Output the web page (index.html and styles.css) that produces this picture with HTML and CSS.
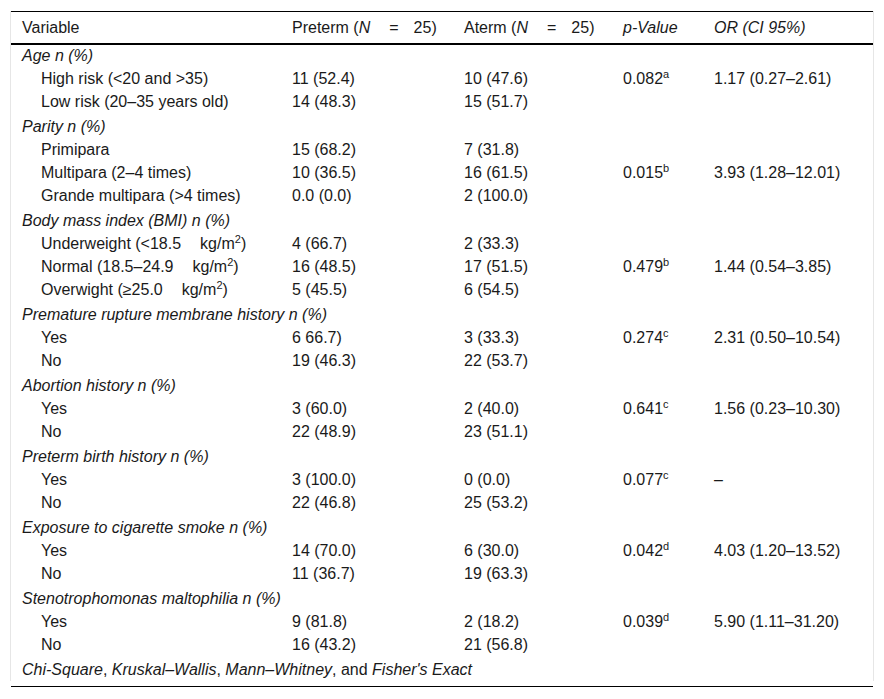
FILE: index.html
```html
<!DOCTYPE html>
<html lang="en">
<head>
<meta charset="utf-8">
<title>Table</title>
<link rel="stylesheet" href="styles.css">
</head>
<body>
<div class="page">
  <div class="frame">
    <table class="data">
      <colgroup>
        <col class="c1"><col class="c2"><col class="c3"><col class="c4"><col class="c5">
      </colgroup>
      <thead>
        <tr>
          <th>Variable</th>
          <th>Preterm (<i>N</i><span class="sp-l"></span>=<span class="sp-r"></span>25)</th>
          <th>Aterm (<i>N</i><span class="sp-l"></span>=<span class="sp-r"></span>25)</th>
          <th><i>p-Value</i></th>
          <th><i>OR (CI 95%)</i></th>
        </tr>
      </thead>
      <tbody>
        <tr class="cat first"><td colspan="5">Age n (%)</td></tr>
        <tr class="sub"><td>High risk (&lt;20 and &gt;35)</td><td>11 (52.4)</td><td>10 (47.6)</td><td>0.082<sup>a</sup></td><td>1.17 (0.27–2.61)</td></tr>
        <tr class="sub"><td>Low risk (20–35 years old)</td><td>14 (48.3)</td><td>15 (51.7)</td><td></td><td></td></tr>

        <tr class="cat"><td colspan="5">Parity n (%)</td></tr>
        <tr class="sub"><td>Primipara</td><td>15 (68.2)</td><td>7 (31.8)</td><td></td><td></td></tr>
        <tr class="sub"><td>Multipara (2–4 times)</td><td>10 (36.5)</td><td>16 (61.5)</td><td>0.015<sup>b</sup></td><td>3.93 (1.28–12.01)</td></tr>
        <tr class="sub"><td>Grande multipara (&gt;4 times)</td><td>0.0 (0.0)</td><td>2 (100.0)</td><td></td><td></td></tr>

        <tr class="cat"><td colspan="5">Body mass index (BMI) n (%)</td></tr>
        <tr class="sub"><td>Underweight (&lt;18.5<span class="sp-u"></span>kg/m<sup>2</sup>)</td><td>4 (66.7)</td><td>2 (33.3)</td><td></td><td></td></tr>
        <tr class="sub"><td>Normal (18.5–24.9<span class="sp-u"></span>kg/m<sup>2</sup>)</td><td>16 (48.5)</td><td>17 (51.5)</td><td>0.479<sup>b</sup></td><td>1.44 (0.54–3.85)</td></tr>
        <tr class="sub"><td>Overwight (≥25.0<span class="sp-u"></span>kg/m<sup>2</sup>)</td><td>5 (45.5)</td><td>6 (54.5)</td><td></td><td></td></tr>

        <tr class="cat"><td colspan="5">Premature rupture membrane history n (%)</td></tr>
        <tr class="sub"><td>Yes</td><td>6 66.7)</td><td>3 (33.3)</td><td>0.274<sup>c</sup></td><td>2.31 (0.50–10.54)</td></tr>
        <tr class="sub"><td>No</td><td>19 (46.3)</td><td>22 (53.7)</td><td></td><td></td></tr>

        <tr class="cat"><td colspan="5">Abortion history n (%)</td></tr>
        <tr class="sub"><td>Yes</td><td>3 (60.0)</td><td>2 (40.0)</td><td>0.641<sup>c</sup></td><td>1.56 (0.23–10.30)</td></tr>
        <tr class="sub"><td>No</td><td>22 (48.9)</td><td>23 (51.1)</td><td></td><td></td></tr>

        <tr class="cat"><td colspan="5">Preterm birth history n (%)</td></tr>
        <tr class="sub"><td>Yes</td><td>3 (100.0)</td><td>0 (0.0)</td><td>0.077<sup>c</sup></td><td>–</td></tr>
        <tr class="sub"><td>No</td><td>22 (46.8)</td><td>25 (53.2)</td><td></td><td></td></tr>

        <tr class="cat"><td colspan="5">Exposure to cigarette smoke n (%)</td></tr>
        <tr class="sub"><td>Yes</td><td>14 (70.0)</td><td>6 (30.0)</td><td>0.042<sup>d</sup></td><td>4.03 (1.20–13.52)</td></tr>
        <tr class="sub"><td>No</td><td>11 (36.7)</td><td>19 (63.3)</td><td></td><td></td></tr>

        <tr class="cat"><td colspan="5">Stenotrophomonas maltophilia n (%)</td></tr>
        <tr class="sub"><td>Yes</td><td>9 (81.8)</td><td>2 (18.2)</td><td>0.039<sup>d</sup></td><td>5.90 (1.11–31.20)</td></tr>
        <tr class="sub"><td>No</td><td>16 (43.2)</td><td>21 (56.8)</td><td></td><td></td></tr>

        <tr class="note"><td colspan="5"><i>Chi-Square</i>, <i>Kruskal–Wallis</i>, <i>Mann–Whitney</i>, and <i>Fisher's Exact</i></td></tr>
      </tbody>
    </table>
  </div>
  <div class="end-rule"></div>
</div>
</body>
</html>
```

FILE: styles.css
```css
html, body {
  margin: 0;
  padding: 0;
  background: #fff;
}

body {
  font-family: "Liberation Sans", Arial, sans-serif;
  font-size: 16px;
  color: #1a1a1a;
}

.page {
  padding: 11px 10px 0;
  width: 864px;
}

.frame {
  border-left: 1px solid #e6e6e6;
  border-right: 1px solid #e6e6e6;
}

.data {
  width: 862px;
  border-collapse: collapse;
  table-layout: fixed;
}

.c1 { width: 270px; }
.c2 { width: 172px; }
.c3 { width: 159px; }
.c4 { width: 91px; }
.c5 { width: 170px; }

.data th {
  text-align: left;
  font-weight: normal;
  line-height: 19px;
  padding: 6px 11px 6px 11px;
  border-top: 1px solid #000;
  border-bottom: 2px solid #000;
  white-space: nowrap;
}

.data td {
  line-height: 19px;
  padding: 2px 11px;
  white-space: nowrap;
  vertical-align: top;
}

.cat td {
  font-style: italic;
  padding-top: 4px;
}

.cat.first td {
  padding-top: 1px;
}

.sub td:first-child {
  padding-left: 30px;
}

.note td {
  padding-top: 4px;
  padding-bottom: 2px;
}

sup {
  font-size: 11px;
  line-height: 0;
  vertical-align: 6px;
}

.sp-l {
  display: inline-block;
  width: 19px;
}

.sp-r {
  display: inline-block;
  width: 15px;
}

.sp-u {
  display: inline-block;
  width: 19px;
}

.end-rule {
  margin: 5px 1px 0;
  border-top: 1px solid #000;
}
```
